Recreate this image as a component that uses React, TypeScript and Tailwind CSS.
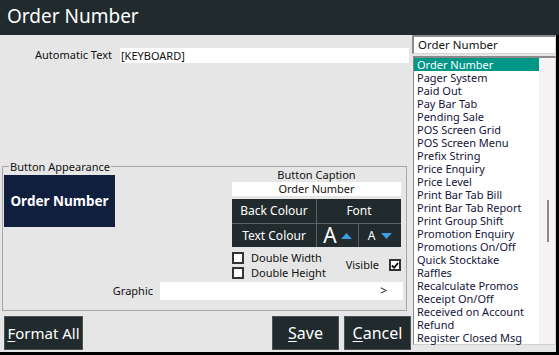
import React from 'react';

const items = [
  'Order Number',
  'Pager System',
  'Paid Out',
  'Pay Bar Tab',
  'Pending Sale',
  'POS Screen Grid',
  'POS Screen Menu',
  'Prefix String',
  'Price Enquiry',
  'Price Level',
  'Print Bar Tab Bill',
  'Print Bar Tab Report',
  'Print Group Shift',
  'Promotion Enquiry',
  'Promotions On/Off',
  'Quick Stocktake',
  'Raffles',
  'Recalculate Promos',
  'Receipt On/Off',
  'Received on Account',
  'Refund',
  'Register Closed Msg',
];

function Check({ checked }: { checked?: boolean }) {
  return (
    <div className="w-[12px] h-[12px] bg-white border-2 border-[#333] flex items-center justify-center">
      {checked && (
        <svg width="9" height="9" viewBox="0 0 9 9">
          <path d="M1 4.5 L3.5 7 L8 1.5" fill="none" stroke="#111" strokeWidth="2" />
        </svg>
      )}
    </div>
  );
}

function Tri({ up }: { up?: boolean }) {
  return (
    <svg width="11" height="6" viewBox="0 0 11 6">
      <path d={up ? 'M0 6 L5.5 0 L11 6 Z' : 'M0 0 L5.5 6 L11 0 Z'} fill="#3a9fe0" />
    </svg>
  );
}

function DarkButton({ first, rest, className }: { first: string; rest: string; className: string }) {
  return (
    <button className={`h-[34px] bg-[#212a2d] border border-[#4a5254] text-white whitespace-nowrap ${className}`}>
      <span className="underline underline-offset-2">{first}</span>
      {rest}
    </button>
  );
}

export default function App() {
  return (
    <div className="w-[559px] h-[355px] bg-[#e6e6e6] flex flex-col overflow-hidden text-[#111] font-['Segoe_UI','Noto_Sans',sans-serif]">
      {/* Title */}
      <div className="h-[35px] bg-[#212a2d] text-white text-[19px] leading-none flex items-center pl-[7px] pb-[2px] shrink-0">
        Order Number
      </div>

      <div className="flex flex-1 min-h-0">
        {/* Left side */}
        <div className="w-[412px] flex flex-col">
          <div className="flex items-center mt-[13px] h-[15px] text-[11px]">
            <div className="w-[120px] text-right pr-[8px]">Automatic Text</div>
            <div className="w-[289px] h-[15px] bg-white pl-[1px] leading-[15px]">[KEYBOARD]</div>
          </div>

          {/* Button Appearance group */}
          <div className="relative mt-[103px] ml-[2px] w-[405px] h-[145px] border border-[#a6a6a6]">
            <span className="absolute -top-[7px] left-[6px] bg-[#e6e6e6] px-[1px] text-[11px] leading-[13px]">
              Button Appearance
            </span>
            <div className="flex">
              <div className="ml-[1px] mt-[8px] w-[111px] h-[52px] bg-[#111f3f] text-white font-bold text-[13.5px] flex items-center justify-center">
                Order Number
              </div>
              <div className="ml-[117px] w-[169px] flex flex-col text-[11px]">
                <div className="h-[15px] leading-[15px] text-center">Button Caption</div>
                <div className="h-[14px] bg-white leading-[14px] text-center">Order Number</div>
                <div className="mt-[3px] h-[48px] bg-[#5a6264] text-white text-[12px] flex flex-col gap-[1px]">
                  <div className="flex h-[24px] gap-[1px]">
                    <div className="w-[84px] bg-[#212a2d] flex items-center justify-center">Back Colour</div>
                    <div className="flex-1 bg-[#212a2d] flex items-center justify-center">Font</div>
                  </div>
                  <div className="flex h-[23px] gap-[1px]">
                    <div className="w-[84px] bg-[#212a2d] flex items-center justify-center">Text Colour</div>
                    <div className="w-[41px] bg-[#212a2d] flex items-center justify-center gap-[4px]">
                      <span className="text-[21px] leading-none">A</span>
                      <Tri up />
                    </div>
                    <div className="flex-1 bg-[#212a2d] flex items-center justify-center gap-[6px]">
                      <span className="text-[12px] leading-none">A</span>
                      <Tri />
                    </div>
                  </div>
                </div>
                <div className="flex mt-[5px]">
                  <div className="flex flex-col gap-[3px]">
                    <div className="flex items-center gap-[7px] h-[12px]">
                      <Check />
                      <span>Double Width</span>
                    </div>
                    <div className="flex items-center gap-[7px] h-[12px]">
                      <Check />
                      <span>Double Height</span>
                    </div>
                  </div>
                  <div className="ml-auto mt-[7px] flex items-center gap-[10px] h-[12px]">
                    <span>Visible</span>
                    <Check checked />
                  </div>
                </div>
              </div>
            </div>
            <div className="flex items-center mt-[3px] text-[11px]">
              <div className="w-[157px] text-right pr-[7px]">Graphic</div>
              <div className="w-[243px] h-[18px] bg-white flex items-center justify-end pr-[16px] text-[12px]">&gt;</div>
            </div>
          </div>

          {/* Bottom buttons */}
          <div className="flex mt-[5px] pl-[4px]">
            <DarkButton first="F" rest="ormat All" className="w-[79px] text-[15px]" />
            <DarkButton first="S" rest="ave" className="w-[67px] ml-auto text-[16px]" />
            <DarkButton first="C" rest="ancel" className="w-[67px] ml-[5px] mr-[1px] text-[16px]" />
          </div>
        </div>

        {/* Right side */}
        <div className="w-[144px] flex flex-col pb-[7px]">
          <div className="h-[20px] bg-white border-t-2 border-l-2 border-[#8a8a8a] border-r border-b border-r-[#d8d8d8] border-b-[#d8d8d8] text-[11.5px] leading-[16px] pl-[4px]">
            Order Number
          </div>
          <div className="mt-[2px] flex-1 ml-[1px] flex bg-white border-t-2 border-l border-[#8a8a8a] border-r border-r-[#d0d0d0] border-b border-b-[#d0d0d0]">
            <div className="flex-1 flex flex-col text-[11px] leading-[13px] text-[#14143a]">
              {items.map((it, i) => (
                <div
                  key={it}
                  className={`h-[13px] pl-[3px] whitespace-nowrap ${i === 0 ? 'bg-[#009688] text-white' : ''}`}
                >
                  {it}
                </div>
              ))}
            </div>
            <div className="relative w-[16px] bg-[#f5f1f5]">
              <div className="absolute left-[8px] top-[142px] w-[2px] h-[42px] bg-[#8a8a8a]" />
            </div>
          </div>
        </div>
        <div className="w-[3px] bg-black" />
      </div>
      <div className="h-[3px] bg-black shrink-0" />
    </div>
  );
}
